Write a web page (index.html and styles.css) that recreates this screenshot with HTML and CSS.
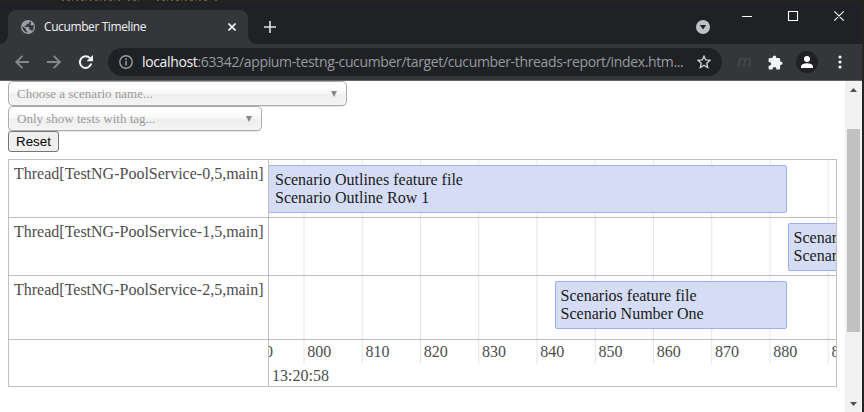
FILE: index.html
```html
<!DOCTYPE html>
<html lang="en">
<head>
<meta charset="utf-8">
<title>Cucumber Timeline</title>
<link rel="stylesheet" href="styles.css">
</head>
<body>
<svg class="backdrop" width="864" height="2" viewBox="0 0 864 2"><path d="M62 .5H120M128 .5H142M157 .5H208M215 .5H218" stroke="#6b5d30" stroke-dasharray="2 3 3 2 1 3"/></svg>
<div class="window">
  <header class="tabstrip">
    <div class="tab">
      <svg class="globe" width="14" height="14" viewBox="0 0 14 14"><circle cx="7" cy="7" r="7" fill="#9aa0a6"/><path d="M8.3 1.6V2.4C8.3 3.2 7.7 3.8 6.9 3.8H5.6V5.1C5.6 5.5 5.3 5.8 4.9 5.8H3.6V7H7.5C8 7 8.3 7.4 8.3 7.8V9.6H9C9.6 9.6 10.1 10 10.3 10.6L11.2 10.9C12.2 9.9 12.7 8.5 12.7 7C12.7 6.2 12.5 5.5 12.3 4.8L10.8 5.7L9.4 4.6L10.2 2.3ZM1.4 6.1C1.2 9.3 3.2 12.1 6.3 12.6V11.2C5.6 11.2 5 10.6 5 9.9V9.2Z" fill="#35363a"/></svg>
      <span class="tab-title">Cucumber Timeline</span>
      <svg class="tab-close" width="8" height="8" viewBox="0 0 8 8"><path d="M.5 .5 L7.5 7.5 M7.5 .5 L.5 7.5" stroke="#f1f3f4" stroke-width="1.6"/></svg>
    </div>
    <svg class="newtab" width="12" height="12" viewBox="0 0 12 12"><path d="M6 0V12M0 6H12" stroke="#dfe1e5" stroke-width="1.6"/></svg>
    <svg class="tabsearch" width="14" height="14" viewBox="0 0 14 14"><circle cx="7" cy="7" r="7" fill="#bdc1c6"/><path d="M3.8 5H10.2L7 9.4Z" fill="#202124"/></svg>
    <svg class="winctl" width="104" height="12" viewBox="0 0 104 12"><path d="M0 6.5H10M46.5 1.5H55.5V10.5H46.5ZM92.3 1.3L101.7 10.7M101.7 1.3L92.3 10.7" fill="none" stroke="#fff" stroke-width="1.1"/></svg>
  </header>
  <nav class="toolbar">
    <svg class="nav-icons" width="80" height="16" viewBox="0 0 80 16">
      <path d="M15 8H2.2M8.5 1.8L2.2 8L8.5 14.2M33 8H46M39.7 1.8L46 8L39.7 14.2" fill="none" stroke="#85878b" stroke-width="1.8"/>
      <path d="M76 4.2A5.8 5.8 0 1 0 77.3 9.6" fill="none" stroke="#f1f3f4" stroke-width="2"/><path d="M79 1V7.2H72.5Z" fill="#f1f3f4"/>
    </svg>
    <div class="omnibox">
      <svg class="info" width="14" height="14" viewBox="0 0 14 14"><circle cx="7" cy="7" r="6.2" fill="none" stroke="#9aa0a6" stroke-width="1.4"/><path d="M7 6V10.5M7 3.3V4.9" stroke="#9aa0a6" stroke-width="1.5"/></svg>
      <span class="url"><b>localhost</b>:63342/appium-testng-cucumber/target/cucumber-threads-report/index.htm...</span>
      <svg class="star" width="14" height="14" viewBox="0 0 14 14"><path d="M7 1.2L8.7 5L12.9 5.4L9.8 8.2L10.7 12.6L7 10.3L3.3 12.6L4.2 8.2L1.1 5.4L5.3 5Z" fill="none" stroke="#d0d2d5" stroke-width="1.3"/></svg>
    </div>
    <span class="ext">m</span>
    <svg class="puzzle" width="15" height="15" viewBox="0 0 15 15"><path d="M4.6 2.9V2.4A1.8 1.8 0 0 1 8.2 2.4V2.9H10.8A1.3 1.3 0 0 1 12.1 4.2V6.4H12.7A1.8 1.8 0 0 1 12.7 10H12.1V13.2A1.3 1.3 0 0 1 10.8 14.5H8.4V13.9A1.9 1.9 0 0 0 4.6 13.9V14.5H1.9A1.3 1.3 0 0 1 .6 13.2V10.7H1.2A1.9 1.9 0 0 0 1.2 6.9H.6V4.2A1.3 1.3 0 0 1 1.9 2.9Z" fill="#f1f3f4"/></svg>
    <svg class="avatar" width="22" height="22" viewBox="0 0 22 22"><circle cx="11" cy="11" r="11" fill="#202124"/><circle cx="11" cy="8" r="3" fill="#fff"/><path d="M5 17V15.5C5 13.3 8.7 12.3 11 12.3S17 13.3 17 15.5V17Z" fill="#fff"/></svg>
    <svg class="dots" width="4" height="14" viewBox="0 0 4 14"><circle cx="2" cy="2" r="1.6" fill="#f1f3f4"/><circle cx="2" cy="7" r="1.6" fill="#f1f3f4"/><circle cx="2" cy="12" r="1.6" fill="#f1f3f4"/></svg>
  </nav>
  <div class="viewport">
    <main class="page">
      <div class="chosen scenario"><span>Choose a scenario name...</span><i></i></div>
      <div class="chosen tag"><span>Only show tests with tag...</span><i></i></div>
      <button class="reset">Reset</button>
      <section class="timeline">
        <div class="threads">
          <div class="thread">Thread[TestNG-PoolService-0,5,main]</div>
          <div class="thread">Thread[TestNG-PoolService-1,5,main]</div>
          <div class="thread last">Thread[TestNG-PoolService-2,5,main]</div>
        </div>
        <div class="chart">
          <svg class="gridlines" width="568" height="204" viewBox="269 160 568 204"><path d="M304 160V364M362.25 160V364M420.5 160V364M478.75 160V364M537 160V364M595.25 160V364M653.5 160V364M711.75 160V364M770 160V364M828.25 160V364" stroke="#e5e5e5"/></svg>
          <div class="lane"><div class="item first">Scenario Outlines feature file<br>Scenario Outline Row 1</div></div>
          <div class="lane"><div class="item second">Scenarios feature file<br>Scenario Number Two</div></div>
          <div class="lane last"><div class="item third">Scenarios feature file<br>Scenario Number One</div></div>
          <div class="axis"><span>790</span><span>800</span><span>810</span><span>820</span><span>830</span><span>840</span><span>850</span><span>860</span><span>870</span><span>880</span><span>890</span></div>
          <div class="time">13:20:58</div>
        </div>
      </section>
    </main>
    <aside class="scrollbar">
      <svg width="7" height="4" viewBox="0 0 7 4"><path d="M0 4L3.5 0L7 4Z" fill="#505050"/></svg>
      <div class="thumb"></div>
      <svg class="down" width="7" height="4" viewBox="0 0 7 4"><path d="M0 0H7L3.5 4Z" fill="#505050"/></svg>
    </aside>
  </div>
</div>
</body>
</html>
```
FILE: styles.css
```css
* { box-sizing: border-box; }
body { margin: 0; width: 864px; height: 412px; overflow: hidden; background: #232420; font-family: "Liberation Serif", serif; font-size: 16px; }
svg { display: block; flex: none; }
.window { width: 862px; height: 410px; display: flex; flex-direction: column; }

.tabstrip { height: 42px; flex: none; background: #202124; display: flex; padding: 8px 0 0 8px; }
.tab { position: relative; width: 240px; height: 34px; background: #35363a; border-radius: 8px 8px 0 0; display: flex; align-items: center; padding: 0 12px 0 13px; }
.tab::before, .tab::after { content: ""; position: absolute; bottom: 0; width: 8px; height: 8px; }
.tab::before { left: -8px; background: radial-gradient(circle at 0 0, #202124 7.5px, #35363a 8px); }
.tab::after { right: -8px; background: radial-gradient(circle at 100% 0, #202124 7.5px, #35363a 8px); }
.tab-title { font: 12px/16px "Open Sans", sans-serif; color: #f1f3f4; margin-left: 9px; letter-spacing: -0.4px; white-space: nowrap; }
.tab-close { margin-left: auto; }
.newtab { margin: 11px 0 0 16px; }
.tabsearch { margin: 10px 0 0 420px; }
.winctl { margin: 0 0 0 32px; }

.toolbar { height: 37px; flex: none; background: #35363a; border-bottom: 1px solid #626266; display: flex; align-items: center; padding-left: 14px; }
.nav-icons { margin-right: 14px; }
.omnibox { width: 614px; height: 28px; border-radius: 14px; background: #202124; display: flex; align-items: center; padding: 0 11px; }
.url { font: 14px/20px "Open Sans", sans-serif; letter-spacing: -0.355px; color: #969ba1; margin-left: 9px; white-space: nowrap; }
.url b { font-weight: 400; color: #f1f3f4; }
.star { margin-left: auto; }
.ext { font: italic 17px/20px "Open Sans", sans-serif; color: #4b4b4b; width: 16px; margin: 0 0 2px 15px; }
.puzzle { margin-left: 15px; }
.avatar { margin-left: 13px; }
.dots { margin-left: 20px; }

.viewport { flex: 1; display: flex; background: #fff; }
.page { width: 845px; padding-left: 8px; }
.chosen { height: 25px; border: 1px solid #aaa; border-radius: 5px; display: flex; align-items: center; justify-content: space-between; padding: 0 9px 0 8px; color: #999; font-size: 13px; background: linear-gradient(#fff 20%, #f6f6f6 50%, #eee 52%, #f4f4f4 100%); box-shadow: 0 0 3px #fff inset, 0 1px 1px rgba(0,0,0,.1); }
.chosen i { border: solid transparent; border-width: 6px 3.5px 0; border-top-color: #888; }
.scenario { width: 339px; }
.tag { width: 254px; }
.reset { display: block; width: 51px; height: 21px; padding: 0; border: 1px solid #767676; border-radius: 3px; background: #efefef; color: #000; font: 13.33px/18px "Liberation Sans", sans-serif; }

.timeline { width: 829px; height: 228px; margin-top: 7px; border: 1px solid #bfbfbf; display: flex; }
.threads { width: 260px; border-right: 1px solid #bfbfbf; color: #4d4d4d; }
.thread, .lane { height: 58px; border-bottom: 1px solid #bfbfbf; }
.thread { padding: 5px; line-height: 18px; white-space: nowrap; }
.thread.last, .lane.last { height: 64px; }
.chart { position: relative; width: 567px; overflow: hidden; }
.gridlines { position: absolute; top: 0; left: 0; }
.lane { position: relative; padding-top: 5px; }
.item { height: 48px; border: 1px solid #97b0f8; border-radius: 2px; background: #d5ddf6; color: #1a1a1a; padding: 5px; line-height: 18px; white-space: nowrap; }
.first { width: 519.4px; margin-left: -1px; padding-left: 6px; }
.second { width: 160px; margin-left: 518.6px; }
.third { width: 232.8px; margin-left: 285.6px; }
.axis { position: relative; display: flex; height: 24px; margin-left: -20px; color: #4d4d4d; line-height: 24px; }
.axis span { flex: 0 0 58.25px; }
.time { padding-left: 3px; line-height: 24px; color: #4d4d4d; }

.scrollbar { width: 17px; background: #f1f1f1; display: flex; flex-direction: column; align-items: center; padding: 7px 0 6px; }
.thumb { width: 13px; height: 203px; margin-top: 37px; background: #c1c1c1; }
.down { margin-top: auto; }
```
